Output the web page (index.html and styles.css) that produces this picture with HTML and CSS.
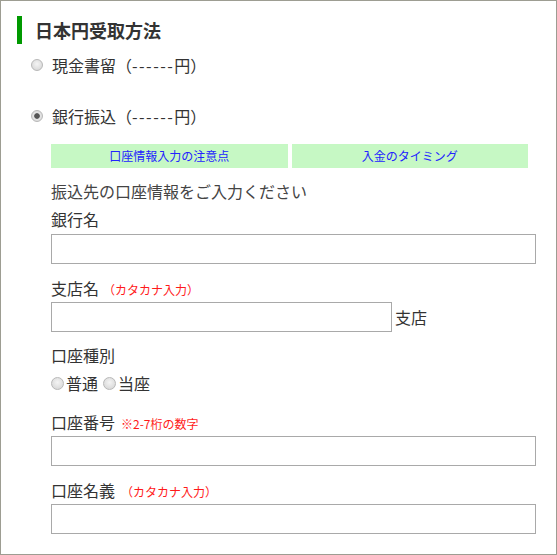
FILE: index.html
```html
<!DOCTYPE html>
<html lang="ja">
<head>
<meta charset="utf-8">
<link rel="stylesheet" href="styles.css">
</head>
<body>
<div class="box">
  <h2 class="title">日本円受取方法</h2>
  <div class="option">
    <input type="radio" name="m" class="radio">
    <span>現金書留（<span class="dash">------</span>円）</span>
  </div>
  <div class="option option2">
    <input type="radio" name="m" class="radio" checked>
    <span>銀行振込（<span class="dash">------</span>円）</span>
  </div>
  <div class="detail">
    <div class="tabs">
      <a class="tab">口座情報入力の注意点</a>
      <a class="tab">入金のタイミング</a>
    </div>
    <div class="intro">振込先の口座情報をご入力ください</div>
    <div class="label l-bank">銀行名</div>
    <input type="text" class="field f-bank">
    <div class="label l-gap">支店名<span class="note note-s">（カタカナ入力）</span></div>
    <div class="branch">
      <input type="text" class="field f-branch">
      <span class="suffix">支店</span>
    </div>
    <div class="label l-type">口座種別</div>
    <div class="types">
      <input type="radio" name="t" class="radio small">
      <span class="type-label">普通</span>
      <input type="radio" name="t" class="radio small">
      <span class="type-label">当座</span>
    </div>
    <div class="label l-num">口座番号<span class="note">※2-7桁の数字</span></div>
    <input type="text" class="field">
    <div class="label l-gap">口座名義<span class="note">（カタカナ入力）</span></div>
    <input type="text" class="field">
  </div>
</div>
</body>
</html>
```
FILE: styles.css
```css
html, body {
  margin: 0;
  padding: 0;
  background: #fff;
}
body {
  font-family: "Noto Sans CJK JP", "Noto Sans", sans-serif;
  color: #333;
}
.box {
  width: 557px;
  height: 555px;
  box-sizing: border-box;
  border: 1px solid #9d9d92;
  padding-top: 15px;
}
.title {
  margin: 0 0 0 16px;
  height: 28px;
  line-height: 28px;
  border-left: 5px solid #009900;
  padding-left: 13px;
  font-size: 18px;
  font-weight: bold;
  color: #333;
}
.option {
  display: flex;
  align-items: center;
  height: 24px;
  margin-top: 9px;
  padding-left: 30px;
  font-size: 16px;
  line-height: 24px;
}
.option2 {
  margin-top: 27px;
}
.dash {
  letter-spacing: 1.5px;
}
.radio {
  -webkit-appearance: none;
  appearance: none;
  margin: 0 9px 0 0;
  width: 12px;
  height: 12px;
  border-radius: 50%;
  border: 1px solid #b8b8b8;
  box-sizing: border-box;
  background: radial-gradient(circle at 50% 40%, #f4f4f4 0, #dcdcdc 70%, #cfcfcf 100%);
}
.radio:checked {
  background: radial-gradient(circle, #555 0 2.4px, #e4e4e4 3.2px, #d2d2d2 100%);
}
.radio.small {
  width: 13px;
  height: 13px;
  margin: 0 2px 0 0;
}
.detail {
  margin-left: 50px;
  width: 485px;
}
.tabs {
  display: flex;
  gap: 4px;
  width: 477px;
  margin-top: 16px;
}
.tab {
  flex: 1;
  height: 24px;
  line-height: 24px;
  background: #c6f8c4;
  color: #2323ff;
  font-size: 12px;
  text-align: center;
}
.intro {
  margin-top: 11px;
  font-size: 16px;
  line-height: 24px;
  color: #444;
}
.label {
  font-size: 16px;
  line-height: 24px;
  height: 24px;
  color: #333;
}
.l-bank {
  margin-top: 4px;
}
.l-gap {
  margin-top: 12px;
}
.l-type {
  margin-top: 11px;
}
.l-num {
  margin-top: 15px;
}
.note {
  margin-left: 6px;
  font-size: 12px;
  color: #ff1a1a;
}
.note-s {
  margin-left: 4px;
}
.field {
  display: block;
  width: 485px;
  height: 30px;
  margin: 2px 0 0;
  box-sizing: border-box;
  border: 1px solid #a9a9a9;
  padding: 0 4px;
  background: #fff;
  outline: none;
}
.f-bank {
  margin-top: 3px;
}
.branch {
  display: flex;
  align-items: center;
  margin-top: 2px;
}
.branch .field {
  width: 341px;
  margin: 0;
}
.suffix {
  margin-left: 3px;
  font-size: 16px;
  line-height: 24px;
}
.types {
  display: flex;
  align-items: center;
  height: 24px;
  margin-top: 4px;
  font-size: 16px;
  line-height: 24px;
}
.type-label {
  margin-right: 5px;
}
```
